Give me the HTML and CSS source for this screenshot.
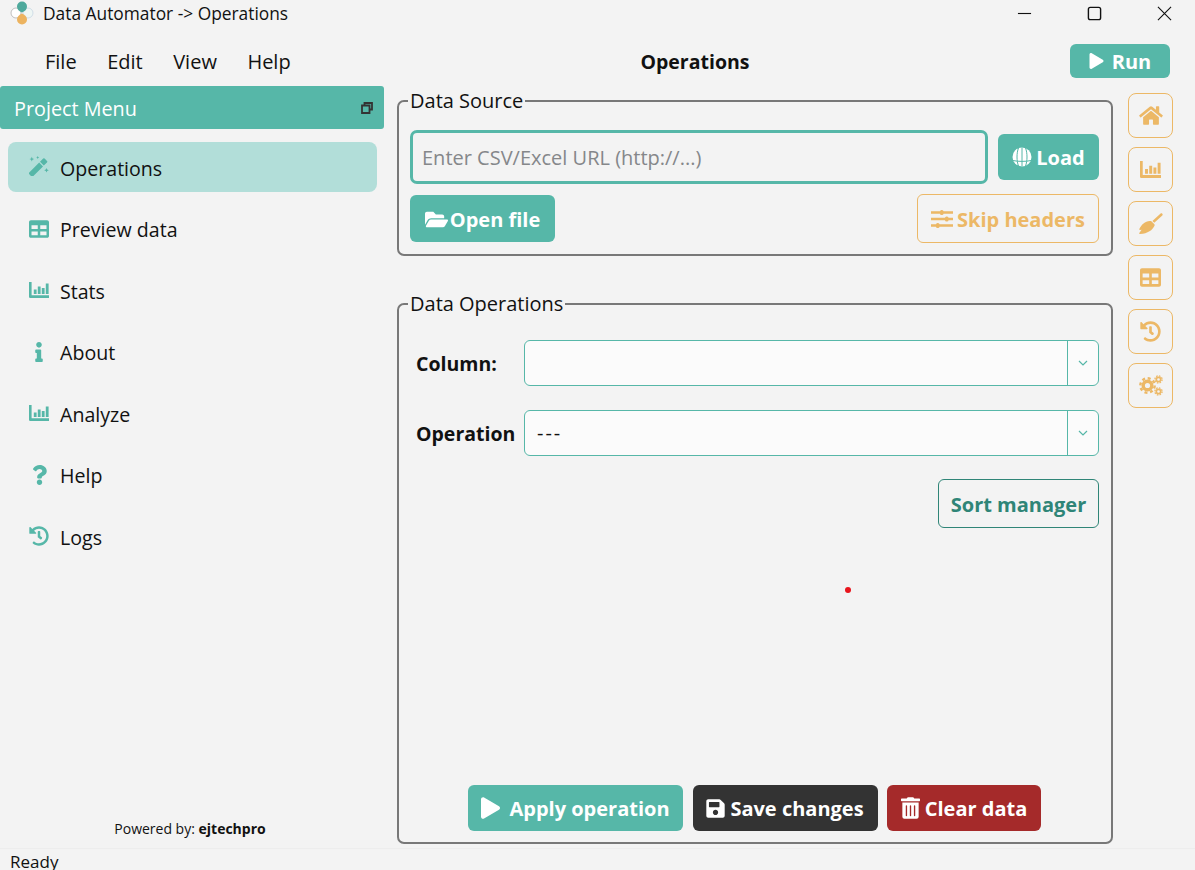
FILE: index.html
```html
<!DOCTYPE html>
<html lang="en">
<head>
	<meta charset="UTF-8">
	<title>Data Automator -> Operations</title>
	<link rel="stylesheet" href="styles.css">
</head>
<body>
	<svg width="0" height="0" class="defs">
		<symbol id="i-play" viewBox="0 0 448 512"><path d="M424.4 214.7L72.4 6.6C43.8-10.3 0 6.1 0 47.9V464c0 37.5 40.7 60.1 72.4 41.3l352-208c31.4-18.5 31.5-64.1 0-82.6z"/></symbol>
		<symbol id="i-table" viewBox="0 0 512 512"><path d="M464 32H48C21.49 32 0 53.49 0 80v352c0 26.51 21.49 48 48 48h416c26.51 0 48-21.49 48-48V80c0-26.51-21.49-48-48-48zM224 416H64v-96h160v96zm0-160H64v-96h160v96zm224 160H288v-96h160v96zm0-160H288v-96h160v96z"/></symbol>
		<symbol id="i-chart" viewBox="0 0 20 16"><path d="M0 0h2.600v13.200H20V16H1.200A1.200 1.200 0 0 1 0 14.800zM4.800 7.500h2.800v4.500H4.800zM8.800 4.500h2.800v7.500H8.800zM12.800 6h2.800v6h-2.800zM16.800 1.500h2.800V12h-2.800z"/></symbol>
		<symbol id="i-history" viewBox="0 0 512 512"><path d="M504 255.531c.253 136.64-111.18 248.372-247.82 248.468-59.015.042-113.223-20.53-155.822-54.911-11.077-8.94-11.905-25.541-1.839-35.607l11.267-11.267c8.609-8.609 22.353-9.551 31.891-1.984C173.062 425.135 212.781 440 256 440c101.705 0 184-82.311 184-184 0-101.705-82.311-184-184-184-48.814 0-93.149 18.969-126.068 49.932l50.754 50.754c10.08 10.08 2.941 27.314-11.313 27.314H24c-8.837 0-16-7.163-16-16V38.627c0-14.254 17.234-21.393 27.314-11.314l49.372 49.372C129.209 34.136 189.552 8 256 8c136.81 0 247.747 110.78 248 247.531zm-180.912 78.784l9.823-12.63c8.138-10.463 6.253-25.542-4.21-33.679L288 256.349V152c0-13.255-10.745-24-24-24h-16c-13.255 0-24 10.745-24 24v135.651l65.409 50.874c10.463 8.137 25.541 6.253 33.679-4.21z"/></symbol>
		<symbol id="i-chevron" viewBox="0 0 10 6"><path d="M1 1l4 4 4-4" fill="none" stroke="currentColor" stroke-width="1.200"/></symbol>
	</svg>

	<header class="titlebar">
		<svg class="logo" viewBox="0 0 24 24">
			<circle cx="6" cy="12" r="5" fill="#fff" stroke="#999" stroke-width=".6"/>
			<circle cx="18" cy="12" r="5" fill="#eef6f4" stroke="#bcd" stroke-width=".6"/>
			<path d="M12 11.500c-3.500-1.500-5-3.500-5-6a5 5 0 0 1 10 0c0 2.500-1.500 4.500-5 6z" fill="#4ea99c"/>
			<path d="M12 12.500c-3.500 1.500-5 3.500-5 6a5 5 0 0 0 10 0c0-2.500-1.500-4.500-5-6z" fill="#ecb35f"/>
		</svg>
		<span class="app-title">Data Automator -&gt; Operations</span>
		<div class="win-controls">
			<span class="win-btn"><svg viewBox="0 0 16 16"><path d="M1 8h14" stroke-width="1.200"/></svg></span>
			<span class="win-btn"><svg viewBox="0 0 16 16"><rect x="1.500" y="1.500" width="13" height="13" rx="2" stroke-width="1.500"/></svg></span>
			<span class="win-btn"><svg viewBox="0 0 16 16"><path d="M1 1l14 14M15 1L1 15" stroke-width="1.200"/></svg></span>
		</div>
	</header>

	<div class="toolbar">
		<nav class="menu">
			<a>File</a>
			<a>Edit</a>
			<a>View</a>
			<a>Help</a>
		</nav>
		<div class="page-title">Operations</div>
		<button class="btn btn-teal btn-run"><svg class="ico"><use href="#i-play"/></svg>Run</button>
	</div>

	<div class="main">
		<aside class="sidebar">
			<div class="side-head">
				<span class="side-head-text">Project Menu</span>
				<svg class="restore" viewBox="0 0 12 12"><path d="M3.500 3V1h7.500v6.500H9M1 3.500h7.500V11H1z" fill="none" stroke="#333" stroke-width="1.800"/></svg>
			</div>
			<ul class="side-list">
				<li class="side-item active">
					<span class="side-icon">
						<svg class="wand" width="20" height="20" viewBox="0 0 20 20"><path d="M0 16.800L10.200 6.600l3.800 3.800L3.800 20.600a1 1 0 0 1-1.400 0L.4 18.200a1 1 0 0 1-.4-1.400zM11 5.800l3.200-3.200a1 1 0 0 1 1.400 0l2.400 2.400a1 1 0 0 1 0 1.400l-3.200 3.200z"/><path d="M2.800.8l.7 1.600 1.600.7-1.600.7-.7 1.600-.7-1.600L.5 3.100l1.600-.7zM8.700 0l.5 1 1 .5-1 .5-.5 1-.5-1-1-.5 1-.5zM17.500 12l.7 1.600 1.600.7-1.600.7-.7 1.600-.7-1.600-1.600-.7 1.600-.7z"/></svg>
					</span>
					<span class="side-text">Operations</span>
				</li>
				<li class="side-item"><span class="side-icon"><svg width="20" height="20"><use href="#i-table"/></svg></span><span class="side-text">Preview data</span></li>
				<li class="side-item"><span class="side-icon"><svg width="20" height="16"><use href="#i-chart"/></svg></span><span class="side-text">Stats</span></li>
				<li class="side-item"><span class="side-icon"><svg width="8" height="20" viewBox="0 0 192 512"><path d="M20 424.229h20V279.771H20c-11.046 0-20-8.954-20-20V212c0-11.046 8.954-20 20-20h112c11.046 0 20 8.954 20 20v212.229h20c11.046 0 20 8.954 20 20V492c0 11.046-8.954 20-20 20H20c-11.046 0-20-8.954-20-20v-47.771c0-11.046 8.954-20 20-20zM96 0C56.235 0 24 32.235 24 72s32.235 72 72 72 72-32.235 72-72S135.764 0 96 0z"/></svg></span><span class="side-text">About</span></li>
				<li class="side-item"><span class="side-icon"><svg width="20" height="16"><use href="#i-chart"/></svg></span><span class="side-text">Analyze</span></li>
				<li class="side-item"><span class="side-icon"><svg width="15" height="20" viewBox="0 0 384 512"><path d="M202.021 0C122.202 0 70.503 32.703 29.914 91.026c-7.363 10.58-5.093 25.086 5.178 32.874l43.138 32.709c10.373 7.865 25.132 6.026 33.253-4.148 25.049-31.381 43.63-49.449 82.757-49.449 30.764 0 68.816 19.799 68.816 49.631 0 22.552-18.617 34.134-48.993 51.164-35.423 19.86-82.299 44.576-82.299 106.405V320c0 13.255 10.745 24 24 24h72.471c13.255 0 24-10.745 24-24v-5.773c0-42.86 125.268-44.645 125.268-160.627C377.504 66.256 286.902 0 202.021 0zM192 373.459c-38.196 0-69.271 31.075-69.271 69.271 0 38.195 31.075 69.27 69.271 69.27s69.271-31.075 69.271-69.271-31.075-69.27-69.271-69.27z"/></svg></span><span class="side-text">Help</span></li>
				<li class="side-item"><span class="side-icon"><svg width="20" height="20"><use href="#i-history"/></svg></span><span class="side-text">Logs</span></li>
			</ul>
			<div class="powered">Powered by: <b>ejtechpro</b></div>
		</aside>

		<section class="content">
			<fieldset class="group group-source">
				<legend>Data Source</legend>
				<div class="row">
					<input class="url-input" type="text" placeholder="Enter CSV/Excel URL (http://...)">
					<button class="btn btn-teal btn-load">
						<svg class="ico globe" viewBox="0 0 20 20"><circle cx="10" cy="10" r="9.500"/><path d="M6.500 1c-2 5-2 13 0 18M13.500 1c2 5 2 13 0 18M10 .5v19M1 13.500c5 1.200 13 1.200 18 0" fill="none" stroke="#56b7a8" stroke-width="1"/></svg>Load
					</button>
				</div>
				<div class="row row-split">
					<button class="btn btn-teal btn-open">
						<svg class="ico folder" viewBox="0 0 576 512"><path d="M572.694 292.093L500.27 416.248A63.997 63.997 0 0 1 444.989 448H45.025c-18.523 0-30.064-20.093-20.731-36.093l72.424-124.155A64 64 0 0 1 152 256h399.964c18.523 0 30.064 20.093 20.73 36.093zM152 224h328v-48c0-26.51-21.49-48-48-48H272l-64-64H48C21.49 64 0 85.49 0 112v278.046l69.077-118.418C86.214 242.25 117.989 224 152 224z"/></svg>Open file
					</button>
					<button class="btn btn-outline btn-skip">
						<svg class="ico sliders" viewBox="0 0 22 18"><path d="M0 2.500h22M0 9h22M0 15.500h22" stroke-width="2.400" stroke="currentColor"/><rect x="9" y="0" width="3.500" height="5" rx="1.500"/><rect x="14" y="6.500" width="3.500" height="5" rx="1.500"/><rect x="5" y="13" width="3.500" height="5" rx="1.500"/></svg>Skip headers
					</button>
				</div>
			</fieldset>

			<fieldset class="group group-ops">
				<legend>Data Operations</legend>
				<div class="field">
					<label class="field-label">Column:</label>
					<div class="combo">
						<span class="combo-value"></span>
						<span class="combo-arrow"><svg width="10" height="6"><use href="#i-chevron"/></svg></span>
					</div>
				</div>
				<div class="field">
					<label class="field-label">Operation</label>
					<div class="combo">
						<span class="combo-value">---</span>
						<span class="combo-arrow"><svg width="10" height="6"><use href="#i-chevron"/></svg></span>
					</div>
				</div>
				<div class="sort-row">
					<button class="btn btn-sort">Sort manager</button>
				</div>
				<span class="red-dot"></span>
				<div class="actions">
					<button class="btn btn-teal btn-apply"><svg class="ico"><use href="#i-play"/></svg>Apply operation</button>
					<button class="btn btn-dark btn-save">
						<svg class="ico" viewBox="0 0 448 512"><path d="M433.941 129.941l-83.882-83.882A48 48 0 0 0 316.118 32H48C21.49 32 0 53.49 0 80v352c0 26.51 21.49 48 48 48h352c26.51 0 48-21.49 48-48V163.882a48 48 0 0 0-14.059-33.941zM224 416c-35.346 0-64-28.654-64-64 0-35.346 28.654-64 64-64s64 28.654 64 64c0 35.346-28.654 64-64 64zm96-304.52V212c0 6.627-5.373 12-12 12H76c-6.627 0-12-5.373-12-12V108c0-6.627 5.373-12 12-12h228.52c3.183 0 6.235 1.264 8.485 3.515l3.48 3.48A11.996 11.996 0 0 1 320 111.48z"/></svg>Save changes
					</button>
					<button class="btn btn-red btn-clear">
						<svg class="ico" viewBox="0 0 448 512"><path d="M32 464a48 48 0 0 0 48 48h288a48 48 0 0 0 48-48V128H32zm272-256a16 16 0 0 1 32 0v224a16 16 0 0 1-32 0zm-96 0a16 16 0 0 1 32 0v224a16 16 0 0 1-32 0zm-96 0a16 16 0 0 1 32 0v224a16 16 0 0 1-32 0zM432 32H312l-9.400-18.700A24 24 0 0 0 281.100 0H166.800a23.720 23.720 0 0 0-21.400 13.300L136 32H16A16 16 0 0 0 0 48v32a16 16 0 0 0 16 16h416a16 16 0 0 0 16-16V48a16 16 0 0 0-16-16z"/></svg>Clear data
					</button>
				</div>
			</fieldset>
		</section>

		<div class="rail">
			<button class="rail-btn"><svg width="24" height="21" viewBox="0 0 576 512"><path d="M280.37 148.26L96 300.11V464a16 16 0 0 0 16 16l112.06-.29a16 16 0 0 0 15.92-16V368a16 16 0 0 1 16-16h64a16 16 0 0 1 16 16v95.64a16 16 0 0 0 16 16.05L464 480a16 16 0 0 0 16-16V300L295.67 148.26a12.19 12.19 0 0 0-15.3 0zM571.6 251.47L488 182.56V44.05a12 12 0 0 0-12-12h-56a12 12 0 0 0-12 12v72.61L318.47 43a48 48 0 0 0-61 0L4.34 251.47a12 12 0 0 0-1.6 16.9l25.5 31A12 12 0 0 0 45.15 301l235.22-193.74a12.19 12.19 0 0 1 15.3 0L530.9 301a12 12 0 0 0 16.9-1.6l25.5-31a12 12 0 0 0-1.7-16.93z"/></svg></button>
			<button class="rail-btn"><svg width="21" height="17"><use href="#i-chart"/></svg></button>
			<button class="rail-btn"><svg width="24" height="22" viewBox="0 0 24 22"><path d="M23.300.7c.5.500.5 1.200 0 1.700l-8 7.400-1.900-1.900 8.200-7.300c.5-.4 1.200-.4 1.700.1zM12.400 8.200l3 3c.4.400.4 1 .1 1.500C13.500 17 9 20.500 1 21c-.6 0-1-.6-.7-1.100l2.300-3.200-1.700.2c-.5 0-.8-.5-.6-.9C2.500 11.500 6 8.500 10.800 8c.6 0 1.200 0 1.600.2z"/></svg></button>
			<button class="rail-btn"><svg width="21" height="21"><use href="#i-table"/></svg></button>
			<button class="rail-btn"><svg width="21" height="21"><use href="#i-history"/></svg></button>
			<button class="rail-btn">
				<svg width="24" height="21" viewBox="0 0 24 21">
					<g fill="none" stroke="currentColor">
						<circle cx="8.500" cy="10.500" r="4.300" stroke-width="3.400"/>
						<circle cx="8.500" cy="10.500" r="7.200" stroke-width="2.400" stroke-dasharray="3 2.650"/>
						<circle cx="19.500" cy="4.500" r="2.200" stroke-width="1.700"/>
						<circle cx="19.500" cy="4.500" r="3.600" stroke-width="1.300" stroke-dasharray="1.600 1.230"/>
						<circle cx="19.500" cy="16.500" r="2.200" stroke-width="1.700"/>
						<circle cx="19.500" cy="16.500" r="3.600" stroke-width="1.300" stroke-dasharray="1.600 1.230"/>
					</g>
				</svg>
			</button>
		</div>
	</div>

	<footer class="statusbar">Ready</footer>
</body>
</html>
```

FILE: styles.css
```css
*{
	margin: 0;
	padding: 0;
	box-sizing: border-box;
}
html,body{
	height: 100%;
}
body{
	height: 870px;
	display: flex;
	flex-direction: column;
	overflow: hidden;
	background-color: #f3f3f3;
	color: #111;
	font-family: "Open Sans", "Noto Sans", sans-serif;
	font-size: 20px;
}
ul{list-style: none;}
.defs{position: absolute;}
svg{fill: currentColor;}

/* title bar */
.titlebar{
	height: 26px;
	display: flex;
	align-items: center;
	padding-left: 10px;
	flex: none;
}
.logo{
	width: 24px;
	height: 24px;
}
.app-title{
	margin-left: 9px;
	font-size: 17.350px;
}
.win-controls{
	margin-left: auto;
	display: flex;
	gap: 25px;
	padding-right: 8px;
}
.win-btn{
	width: 45px;
	display: flex;
	justify-content: center;
}
.win-btn svg{
	width: 15px;
	height: 15px;
	fill: none;
	stroke: #111;
}

/* menu + page title */
.toolbar{
	height: 60px;
	padding-top: 10px;
	display: flex;
	align-items: center;
	flex: none;
}
.menu{
	width: 384px;
	display: flex;
	gap: 30.500px;
	padding-left: 45px;
	font-size: 20px;
}
.page-title{
	flex: 1;
	padding-right: 64px;
	text-align: center;
	font-weight: 700;
	font-size: 19.500px;
}
.btn{
	border: 0;
	border-radius: 6px;
	display: inline-flex;
	align-items: center;
	justify-content: center;
	font-family: inherit;
	font-size: 20px;
	font-weight: 700;
	color: #fff;
}
.btn .ico{
	width: 18px;
	height: 18px;
	flex: none;
}
.btn-teal{background-color: #56b7a8;}
.btn-dark{background-color: #333;}
.btn-red{background-color: #a52a2a;}
.btn-run{
	width: 100px;
	height: 34px;
	margin-right: 25px;
	gap: 8px;
}
.btn-run .ico{
	width: 15px;
	height: 16px;
}

/* layout */
.main{
	flex: 1;
	min-height: 0;
	display: flex;
}
.sidebar{
	width: 384px;
	flex: none;
	display: flex;
	flex-direction: column;
}
.side-head{
	height: 43px;
	flex: none;
	padding: 0 11px 0 14px;
	display: flex;
	align-items: center;
	justify-content: space-between;
	background-color: #56b7a8;
	border-radius: 3px;
	color: #fff;
}
.side-head-text{
	padding-top: 2px;
	font-size: 19.800px;
}
.restore{
	width: 12px;
	height: 12px;
}
.side-list{
	margin-top: 13px;
	padding: 0 7px 0 8px;
	display: flex;
	flex-direction: column;
	gap: 11.500px;
}
.side-item{
	height: 50px;
	display: flex;
	align-items: center;
	gap: 11px;
	padding-left: 21px;
	border-radius: 8px;
	font-size: 19.600px;
}
.side-item.active{
	background-color: #b2ded9;
}
.side-text{
	padding-top: 2px;
}
.side-icon{
	width: 20px;
	display: flex;
	justify-content: center;
	color: #56b7a8;
}
.wand{
	margin-top: -2px;
}
.powered{
	margin-top: auto;
	padding-bottom: 9px;
	text-align: center;
	font-size: 14px;
	line-height: 20px;
	margin-left: -4px;
}

.content{
	width: 716px;
	flex: none;
	margin-left: 13px;
	padding-top: 2px;
	padding-bottom: 4px;
	display: flex;
	flex-direction: column;
	gap: 35px;
}
.group{
	border: 2px solid #787878;
	border-radius: 7px;
	padding: 0 12px 0 11px;
	min-width: 0;
}
.group legend{
	margin-left: -2px;
	padding: 0 2px;
	line-height: 26px;
	font-size: 20px;
}
.group-source{
	height: 168px;
	flex: none;
	padding-top: 16px;
}
.group-ops{
	flex: 1;
	min-height: 0;
	position: relative;
	display: flex;
	flex-direction: column;
	padding-top: 23px;
}
.row{
	display: flex;
	align-items: center;
	justify-content: space-between;
}
.row-split{
	margin-top: 10px;
}
.url-input{
	width: 578px;
	height: 54px;
	border: 3px solid #56b7a8;
	border-radius: 7px;
	background: #f3f3f3;
	padding: 0 9px;
	font-family: inherit;
	font-size: 20px;
	outline: none;
}
.url-input::placeholder{
	color: #85878a;
}
.btn-load{
	width: 101px;
	height: 46px;
	gap: 4px;
}
.btn-load .ico{
	width: 20px;
	height: 20px;
}
.btn-open{
	width: 145px;
	height: 47px;
	gap: 2px;
	padding-top: 1px;
}
.btn-open .ico{
	width: 23px;
	height: 21px;
}
.btn-outline{
	background: transparent;
	border: 1.500px solid #ecb866;
	color: #ecb866;
}
.btn-skip{
	width: 182px;
	height: 49px;
	gap: 4px;
	padding-top: 1px;
}
.btn-skip .ico{
	width: 22px;
	height: 18px;
}

.field{
	display: flex;
	align-items: center;
	margin-bottom: 24px;
	padding-left: 6px;
}
.field + .field{
	margin-bottom: 23px;
}
.field-label{
	width: 108px;
	font-weight: 700;
	font-size: 19.500px;
}
.combo{
	flex: 1;
	height: 46px;
	display: flex;
	align-items: stretch;
	border: 1.500px solid #56b7a8;
	border-radius: 6px;
	background-color: #fbfbfb;
}
.combo-value{
	flex: 1;
	padding-left: 12px;
	line-height: 44px;
	letter-spacing: 2px;
}
.combo-arrow{
	width: 31px;
	display: flex;
	align-items: center;
	justify-content: center;
	border-left: 1.500px solid #56b7a8;
	color: #56b7a8;
}
.sort-row{
	display: flex;
	justify-content: flex-end;
}
.btn-sort{
	width: 161px;
	height: 49px;
	padding-top: 2px;
	background: transparent;
	border: 1.500px solid #2f8577;
	color: #2f8577;
}
.red-dot{
	position: absolute;
	left: 446px;
	top: 270px;
	width: 6px;
	height: 6px;
	border-radius: 50%;
	background-color: #e8141c;
}
.actions{
	margin-top: auto;
	margin-bottom: 11px;
	display: flex;
	justify-content: center;
	gap: 9.500px;
	height: 46px;
}
.btn-apply{
	width: 215px;
	gap: 9px;
}
.btn-apply .ico{
	width: 19px;
	height: 22px;
}
.btn-save{
	width: 185px;
	gap: 5px;
}
.btn-save .ico{
	width: 19px;
	height: 21px;
}
.btn-clear{
	width: 154px;
	gap: 5px;
}
.btn-clear .ico{
	width: 19px;
	height: 22px;
}

.rail{
	width: 45px;
	flex: none;
	margin-left: 15px;
	margin-top: 7px;
	display: flex;
	flex-direction: column;
	gap: 9px;
}
.rail-btn{
	width: 45px;
	height: 45px;
	background: transparent;
	border: 1.500px solid #ecb866;
	border-radius: 8px;
	color: #ecb866;
	display: flex;
	align-items: center;
	justify-content: center;
}

.statusbar{
	height: 22px;
	flex: none;
	padding-left: 10px;
	border-top: 1px solid #ededed;
	font-size: 17px;
	line-height: 26px;
	overflow: hidden;
}
```
